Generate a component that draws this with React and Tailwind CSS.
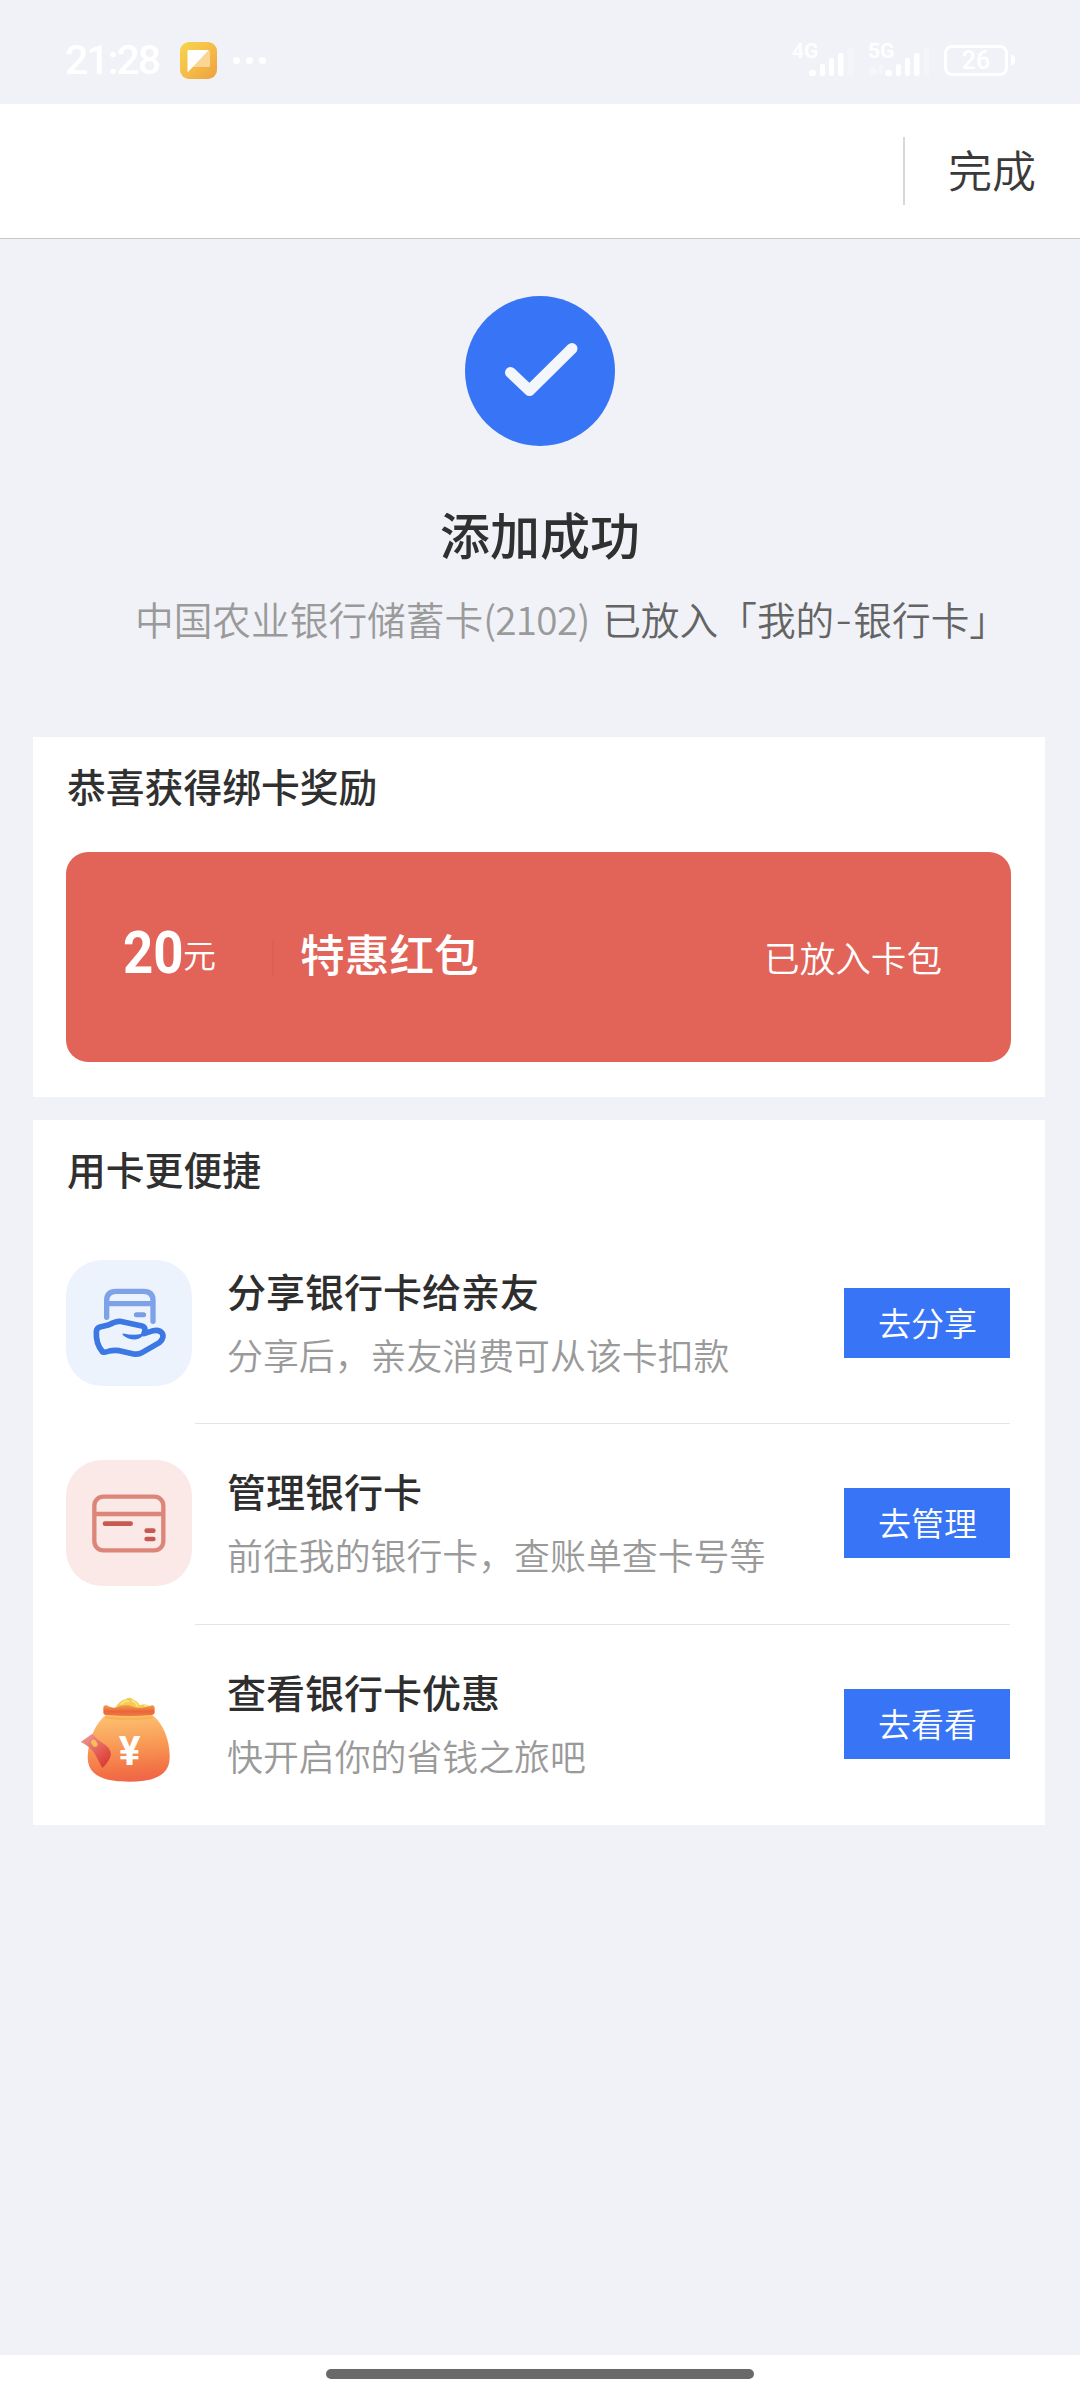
import clsx from "clsx";

// 手机信号：左上角网络制式 + 五格信号
function Signal({ label, arrows }) {
    return (
        <div className="relative w-16 h-[34px]">
            <span className="absolute left-0 top-0 text-[21px] leading-[17px] font-bold text-white/90">
                {label}
            </span>
            <svg className="block w-16 h-[34px]" viewBox="0 0 64 34">
                {arrows && (
                    <path
                        d="M1 27l4-5 4 5v5H1zM11 22h4v6l-2 4-2-4z"
                        fill="#fff"
                        opacity="0.35"
                    />
                )}
                <g fill="#fff">
                    <rect x="17" y="27" width="7" height="6" rx="2.5" />
                    <rect x="28" y="21" width="5" height="12" rx="2" />
                    <rect x="37" y="15" width="5" height="18" rx="2" />
                    <rect x="46" y="10" width="5.5" height="23" rx="2" />
                    <rect
                        x="55.5"
                        y="4"
                        width="6"
                        height="29"
                        rx="2"
                        opacity="0.25"
                    />
                </g>
            </svg>
        </div>
    );
}

function StatusBar() {
    return (
        <div className="h-[104px] pl-[65px] pr-[65px] pt-4 flex items-center justify-between font-[Roboto,sans-serif]">
            <div className="flex items-center">
                <span className="w-[115px] text-[41px] leading-none font-medium tracking-[-2px] text-white">
                    21:28
                </span>
                <svg className="w-[37px] h-[37px]" viewBox="0 0 37 37">
                    <defs>
                        <linearGradient id="app" x1="0" y1="0" x2="1" y2="1">
                            <stop offset="0" stopColor="#f6d64c" />
                            <stop offset="0.5" stopColor="#f5bd48" />
                            <stop offset="1" stopColor="#eda040" />
                        </linearGradient>
                    </defs>
                    <rect width="37" height="37" rx="9" fill="url(#app)" />
                    <path
                        d="M29 8.5l1 1v14.500q0 1-1 1H12z"
                        fill="#fbd596"
                    />
                    <path d="M8 8h21L7.500 30.500V9q0-1 1-1z" fill="#fff" />
                </svg>
                <div className="ml-4 flex gap-1.5">
                    <span className="w-[7px] h-[7px] rounded-full bg-white" />
                    <span className="w-[7px] h-[7px] rounded-full bg-white" />
                    <span className="w-[7px] h-[7px] rounded-full bg-white" />
                </div>
            </div>
            <div className="flex items-center gap-3">
                <Signal label="4G" />
                <Signal label="5G" arrows />
                <div className="flex items-center gap-[3px]">
                    <div className="w-16 h-[31px] rounded-[8px] border-[3px] border-white flex items-center justify-center text-[25px] leading-none font-medium text-white">
                        26
                    </div>
                    <div className="w-1 h-[10px] rounded-r bg-white" />
                </div>
            </div>
        </div>
    );
}

function ShareIcon() {
    return (
        <svg className="w-[126px] h-[126px]" viewBox="78 60 378 378">
            <rect x="78" y="60" width="378" height="378" rx="108" fill="#ecf3fd" />
            <g fill="none" strokeLinecap="round" strokeLinejoin="round">
                <path
                    d="M200 232V182q0-28 28-28h83q28 0 28 28v62M200 191h139"
                    stroke="#7ea2e8"
                    strokeWidth="16"
                />
                <path d="M289 224h22" stroke="#7b9de4" strokeWidth="15" />
                <path
                    d="M188 336C172 318 168 294 169 275Q170 264 180 261L205 255Q228 243 240 244L306 258Q320 262 312 281L340 272Q358 268 367 280Q374 294 358 308L306 338Q296 344 281 342L238 332Q222 330 208 333Q196 338 188 336Z"
                    stroke="#3b78e3"
                    strokeWidth="17"
                />
                <path
                    d="M250 283Q262 295 285 296Q306 294 314 276L306 284Q280 290 250 283Z"
                    fill="#3b78e3"
                    stroke="#3b78e3"
                    strokeWidth="5"
                />
            </g>
        </svg>
    );
}

function ManageIcon() {
    return (
        <svg className="w-[126px] h-[126px]" viewBox="78 90 378 378">
            <rect x="78" y="90" width="378" height="378" rx="108" fill="#fae9e6" />
            <g fill="none" strokeLinecap="round">
                <rect
                    x="163"
                    y="200"
                    width="207"
                    height="161"
                    rx="27"
                    stroke="#dc8679"
                    strokeWidth="13"
                />
                <path d="M166 252h201" stroke="#dc8679" strokeWidth="13" />
                <path
                    d="M195 281h77M320 302h20M320 327h20"
                    stroke="#c75a50"
                    strokeWidth="14"
                />
            </g>
        </svg>
    );
}

function BagIcon() {
    return (
        <svg className="w-[126px] h-[126px]" viewBox="48 3 378 378">
            <defs>
                <linearGradient id="bag" x1="0.45" y1="0" x2="0.55" y2="1">
                    <stop offset="0" stopColor="#fcc270" />
                    <stop offset="0.45" stopColor="#f99a56" />
                    <stop offset="0.85" stopColor="#f27145" />
                    <stop offset="1" stopColor="#f0644a" />
                </linearGradient>
                <linearGradient id="neck" x1="0" y1="0" x2="0" y2="1">
                    <stop offset="0" stopColor="#f4a04e" />
                    <stop offset="0.6" stopColor="#ea6538" />
                    <stop offset="1" stopColor="#ef7a43" />
                </linearGradient>
                <linearGradient id="packet" x1="0" y1="0" x2="0.7" y2="1">
                    <stop offset="0" stopColor="#f0a3a0" />
                    <stop offset="0.5" stopColor="#e56a60" />
                    <stop offset="1" stopColor="#dc3b36" />
                </linearGradient>
            </defs>
            <path
                d="M196 142Q212 120 226 118Q238 108 252 120Q264 124 270 136Q290 128 302 142L250 158Z"
                fill="#f6cb52"
            />
            <path
                d="M214 132Q224 120 236 124M246 122Q258 126 262 138M284 136l8 2"
                fill="none"
                stroke="#fbe68a"
                strokeWidth="5"
                strokeLinecap="round"
            />
            <path
                d="M168 164H306C340 190 360 240 359 292C359 348 310 365 238 365C160 365 112 346 113 290C116 235 136 190 168 164Z"
                fill="url(#bag)"
            />
            <path
                d="M160 144Q160 134 170 136Q184 146 200 142Q226 130 244 138Q262 148 286 142L306 136Q314 136 314 146V158Q312 166 302 165Q238 171 172 165Q160 165 160 158Z"
                fill="url(#neck)"
            />
            <path
                d="M168 173Q238 180 306 173"
                fill="none"
                stroke="#fbb052"
                strokeWidth="6"
                strokeLinecap="round"
            />
            <path
                d="M92 246L127 221Q142 240 158 250Q182 262 183 284Q178 304 157 324Q146 304 136 284Q120 258 92 246Z"
                fill="url(#packet)"
            />
            <ellipse
                cx="133"
                cy="250"
                rx="8"
                ry="12"
                transform="rotate(-35 133 250)"
                fill="#f8bd58"
            />
            <text
                x="239"
                y="314"
                textAnchor="middle"
                className="font-[Roboto,sans-serif] font-bold"
                fontSize="122"
                fill="#fff"
            >
                ¥
            </text>
        </svg>
    );
}

const services = [
    {
        title: "分享银行卡给亲友",
        desc: "分享后，亲友消费可从该卡扣款",
        action: "去分享",
        Icon: ShareIcon,
    },
    {
        title: "管理银行卡",
        desc: "前往我的银行卡，查账单查卡号等",
        action: "去管理",
        Icon: ManageIcon,
    },
    {
        title: "查看银行卡优惠",
        desc: "快开启你的省钱之旅吧",
        action: "去看看",
        Icon: BagIcon,
    },
];

function ServiceRow({ item, first }) {
    const { title, desc, action, Icon } = item;
    return (
        <li className="flex h-[201px] first:h-[200px]">
            <div className="pt-[37px] shrink-0">
                <Icon />
            </div>
            <div
                className={clsx(
                    "ml-[3px] pl-8 flex-1 flex items-start justify-between border-t",
                    first ? "border-transparent" : "border-[#e4e4e4]"
                )}
            >
                <div className="pt-[38px]">
                    <h3 className="text-[39px] leading-[56px] font-medium text-[#2e2e2e]">
                        {title}
                    </h3>
                    <p className="mt-2 text-[35.9px] leading-[56px] font-[350] text-[#9a9a9a]">
                        {desc}
                    </p>
                </div>
                <button className="mt-16 w-[166px] h-[70px] pl-px bg-[#3875f6] text-[33px] font-[350] text-white">
                    {action}
                </button>
            </div>
        </li>
    );
}

export default function App() {
    return (
        <div className="w-[1080px] h-[2400px] flex flex-col bg-[#f0f2f7] text-[#303030] whitespace-nowrap font-['Noto_Sans_CJK_SC',sans-serif]">
            <StatusBar />

            {/* 顶部导航 */}
            <header className="h-[135px] bg-white border-b border-[#c6c6c8] flex items-center justify-end pr-11">
                <span className="w-0.5 h-[68px] bg-[#d8d8d8]" />
                <button className="ml-[43px] pb-1 text-[44px] leading-none font-[350] text-[#3a3a3a]">
                    完成
                </button>
            </header>

            {/* 添加结果 */}
            <section className="h-[498px] pt-[57px] flex flex-col items-center">
                <svg className="w-[150px] h-[150px]" viewBox="0 0 150 150">
                    <circle cx="75" cy="75" r="75" fill="#3875f6" />
                    <path
                        d="M45.500 76.500L64.500 94.500L107 52.500"
                        fill="none"
                        stroke="#f3f6fb"
                        strokeWidth="11"
                        strokeLinecap="round"
                        strokeLinejoin="round"
                    />
                </svg>
                <h1 className="mt-[51px] text-[50px] leading-[72px] font-medium">
                    添加成功
                </h1>
                <p className="mt-[21px] w-full pl-[135px] flex text-[38.7px] leading-[56px] font-[350] text-[#9a9a9a]">
                    中国农业银行储蓄卡
                    <span className="w-[119px] tracking-[-0.7px]">(2102)</span>
                    <span className="text-[#646464]">
                        已放入「我的
                        <span className="inline-block w-[19px] text-center font-[Inter,sans-serif]">
                            -
                        </span>
                        银行卡」
                    </span>
                </p>
            </section>

            {/* 绑卡奖励 */}
            <section className="mx-[33px] w-[1012px] h-[360px] px-[33px] pt-5 bg-white">
                <h2 className="pl-px text-[38.8px] leading-[56px] font-medium">
                    恭喜获得绑卡奖励
                </h2>
                <div className="mt-[39px] w-[945px] h-[210px] rounded-[22px] bg-[#e26459] pl-[57px] pr-[69px] flex items-center text-white">
                    <span className="w-[60px] pb-[9px] text-[60px] leading-none font-bold font-[Roboto,sans-serif]">
                        <span className="inline-block origin-left scale-x-[0.88]">
                            20
                        </span>
                    </span>
                    <span className="pb-1.5 text-[33px] leading-none font-[350]">
                        元
                    </span>
                    <span className="ml-14 w-0.5 h-9 bg-[#dc5e54]" />
                    <span className="ml-[26px] pb-2 text-[44.7px] leading-none font-medium">
                        特惠红包
                    </span>
                    <span className="ml-auto text-[35.6px] leading-none font-[350]">
                        已放入卡包
                    </span>
                </div>
            </section>

            {/* 用卡服务 */}
            <section className="mt-[23px] mx-[33px] w-[1012px] h-[705px] px-[33px] pt-5 bg-white">
                <h2 className="h-[83px] pl-px text-[38.8px] leading-[56px] font-medium">
                    用卡更便捷
                </h2>
                <ul className="pr-0.5">
                    {services.map((item, i) => (
                        <ServiceRow
                            key={item.title}
                            item={item}
                            first={i === 0}
                        />
                    ))}
                </ul>
            </section>

            {/* 底部手势条 */}
            <footer className="mt-auto h-[45px] pt-3.5 bg-white flex justify-center">
                <div className="w-[428px] h-[10px] rounded-full bg-[#6a6a6a]" />
            </footer>
        </div>
    );
}
